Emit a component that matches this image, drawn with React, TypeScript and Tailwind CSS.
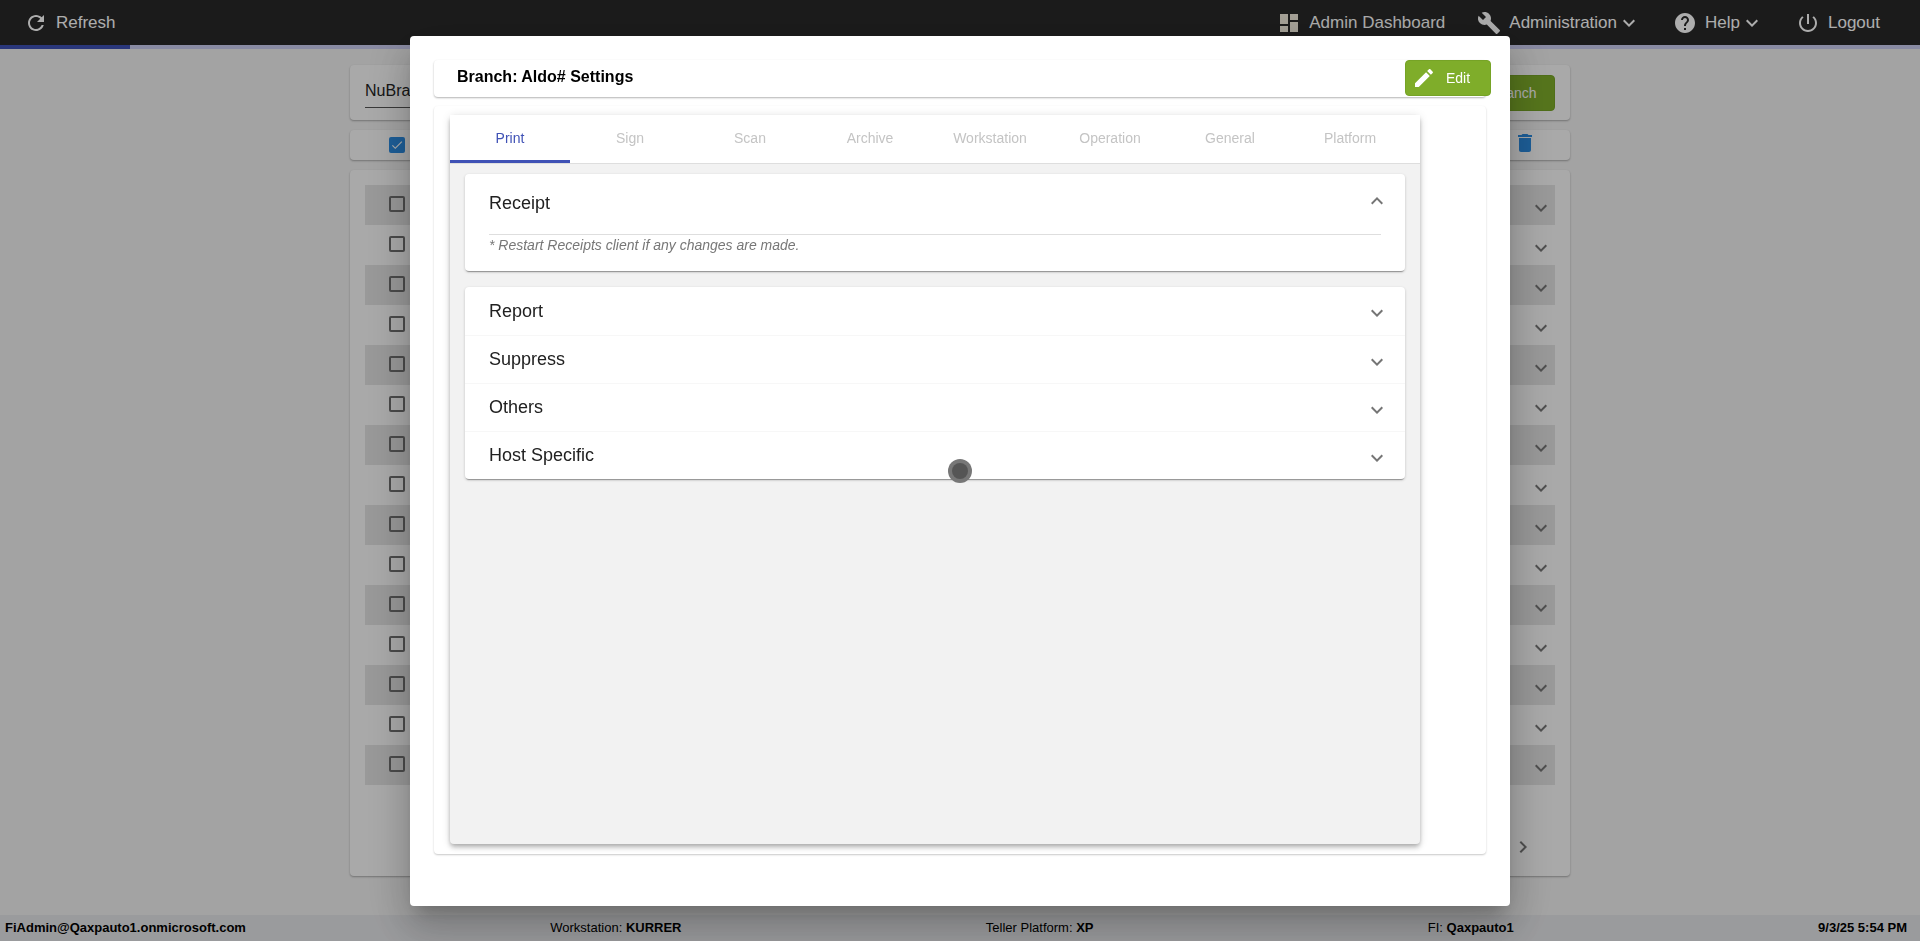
const font = "font-['Liberation_Sans',Arial,sans-serif]";

const tabs = ["Print", "Sign", "Scan", "Archive", "Workstation", "Operation", "General", "Platform"];
const closedPanels = ["Report", "Suppress", "Others", "Host Specific"];
const rows = Array.from({ length: 15 }, (_, i) => i);

const MaterialIcon = ({ d, className }: { d: string; className?: string }) => (
  <svg viewBox="0 0 24 24" className={`h-6 w-6 shrink-0 fill-current ${className ?? ""}`}>
    <path d={d} />
  </svg>
);

const icons = {
  refresh:
    "M17.65 6.35C16.2 4.9 14.21 4 12 4c-4.42 0-7.99 3.58-7.99 8s3.57 8 7.99 8c3.73 0 6.84-2.55 7.73-6h-2.08c-.82 2.33-3.04 4-5.65 4-3.31 0-6-2.69-6-6s2.69-6 6-6c1.66 0 3.14.69 4.22 1.78L13 11h7V4l-2.35 2.35z",
  dashboard: "M3 13h8V3H3v10zm0 8h8v-6H3v6zm10 0h8V11h-8v10zm0-18v6h8V3h-8z",
  build:
    "M22.7 19l-9.1-9.1c.9-2.3.4-5-1.5-6.9-2-2-5-2.4-7.4-1.3L9 6 6 9 1.6 4.7C.4 7.1.9 10.1 2.9 12.1c1.9 1.9 4.6 2.4 6.9 1.5l9.1 9.1c.4.4 1 .4 1.4 0l2.3-2.3c.5-.4.5-1.1.1-1.4z",
  help: "M12 2C6.48 2 2 6.48 2 12s4.48 10 10 10 10-4.48 10-10S17.52 2 12 2zm1 17h-2v-2h2v2zm2.07-7.75l-.9.92C13.45 12.9 13 13.5 13 15h-2v-.5c0-1.1.45-2.1 1.17-2.83l1.24-1.26c.37-.36.59-.86.59-1.41 0-1.1-.9-2-2-2s-2 .9-2 2H8c0-2.21 1.79-4 4-4s4 1.79 4 4c0 .88-.36 1.68-.93 2.25z",
  power:
    "M13 3h-2v10h2V3zm4.83 2.17l-1.42 1.42C17.99 7.86 19 9.81 19 12c0 3.87-3.13 7-7 7s-7-3.13-7-7c0-2.19 1.01-4.14 2.58-5.42L6.17 5.17C4.23 6.82 3 9.26 3 12c0 4.97 4.03 9 9 9s9-4.03 9-9c0-2.74-1.23-5.18-3.17-6.83z",
  down: "M16.59 8.59L12 13.17 7.41 8.59 6 10l6 6 6-6z",
  up: "M12 8l-6 6 1.41 1.41L12 10.83l4.59 4.58L18 14z",
  right: "M10 6L8.59 7.41 13.17 12l-4.58 4.59L10 18l6-6z",
  edit: "M3 17.25V21h3.75L17.81 9.94l-3.75-3.75L3 17.25zM20.71 7.04c.39-.39.39-1.02 0-1.41l-2.34-2.34c-.39-.39-1.02-.39-1.41 0l-1.83 1.83 3.75 3.75 1.83-1.83z",
  trash: "M6 19c0 1.1.9 2 2 2h8c1.1 0 2-.9 2-2V7H6v12zM19 4h-3.5l-1-1h-5l-1 1H5v2h14V4z",
  check: "M9 16.17L4.83 12l-1.42 1.41L9 19 21 7l-1.41-1.41z",
};

const Page = () => (
  <div className="flex h-screen flex-col overflow-hidden bg-[#f0f0f0]">
    <header className="flex h-[45px] shrink-0 items-center justify-between bg-[#292929] pl-6 pr-10 text-[17px] text-white">
      <div className="flex items-center gap-2">
        <MaterialIcon d={icons.refresh} />
        <span>Refresh</span>
      </div>
      <nav className="flex items-center gap-8">
        <div className="flex items-center gap-2">
          <MaterialIcon d={icons.dashboard} className="text-[#f5efe0]" />
          <span>Admin Dashboard</span>
        </div>
        <div className="flex items-center">
          <MaterialIcon d={icons.build} className="mr-2" />
          <span>Administration</span>
          <MaterialIcon d={icons.down} />
        </div>
        <div className="flex items-center">
          <MaterialIcon d={icons.help} className="mr-2" />
          <span>Help</span>
          <MaterialIcon d={icons.down} />
        </div>
        <div className="flex items-center gap-2">
          <MaterialIcon d={icons.power} />
          <span>Logout</span>
        </div>
      </nav>
    </header>
    <div className="h-1 shrink-0 bg-[#cbcdf0]">
      <div className="h-1 w-[130px] bg-[#3f51b5]" />
    </div>

    <main className="mx-auto flex w-[1220px] flex-1 flex-col gap-2.5 pt-4">
      <div className="flex h-[55px] items-center justify-between rounded bg-[#fafafa] px-[15px] shadow-[0_1px_2px_rgba(0,0,0,0.3)]">
        <div className="mt-[-2px] w-[200px] border-b border-[#555] py-1 text-base text-[#222]">NuBranch</div>
        <button type="button" className="h-9 w-[130px] rounded-sm border border-[#76a326] bg-[#7fad2a] pl-5 text-sm text-white">
          Add Branch
        </button>
      </div>
      <div className="flex h-[30px] items-center justify-between rounded bg-[#fafafa] pl-[39px] pr-[33px] shadow-[0_1px_2px_rgba(0,0,0,0.3)]">
        <span className="flex h-4 w-4 items-center justify-center rounded-[2px] bg-[#2b8be0] text-white">
          <svg viewBox="0 0 24 24" className="h-3.5 w-3.5 fill-current">
            <path d={icons.check} />
          </svg>
        </span>
        <MaterialIcon d={icons.trash} className="mt-[-4px] text-[#2b8be0]" />
      </div>
      <div className="flex h-[706px] flex-col rounded bg-[#fafafa] px-[15px] pt-[15px] shadow-[0_1px_2px_rgba(0,0,0,0.3)]">
        {rows.map((row) => (
          <div
            key={row}
            className={`flex h-10 shrink-0 items-center justify-between pl-6 pr-0.5 text-[#757575] ${row % 2 === 0 ? "bg-[#e2e2e2]" : ""}`}
          >
            <span className="mt-[-2px] h-4 w-4 rounded-[2px] border-2 border-[#6e6e6e]" />
            <MaterialIcon d={icons.down} className="mt-[5px]" />
          </div>
        ))}
        <div className="mt-[50px] flex justify-end pr-5 text-[#757575]">
          <MaterialIcon d={icons.right} />
        </div>
      </div>
    </main>

    <footer className="flex h-[26px] shrink-0 items-center justify-between bg-[#e4e5e8] pl-[5px] pr-[13px] text-[13px] text-black">
      <b>FiAdmin@Qaxpauto1.onmicrosoft.com</b>
      <span>
        Workstation: <b>KURRER</b>
      </span>
      <span>
        Teller Platform: <b>XP</b>
      </span>
      <span className="ml-[30px]">
        FI: <b>Qaxpauto1</b>
      </span>
      <b>9/3/25 5:54 PM</b>
    </footer>
  </div>
);

const SettingsDialog = () => (
  <div className="h-[870px] w-[1100px] rounded bg-white px-6 pt-6 shadow-[0_11px_15px_-7px_rgba(0,0,0,0.2),0_24px_38px_3px_rgba(0,0,0,0.14),0_9px_46px_8px_rgba(0,0,0,0.12)]">
    <div className="flex h-[37px] items-start justify-between rounded shadow-[0_1px_2px_rgba(0,0,0,0.3)]">
      <h2 className="pl-[23px] pt-[8px] text-base font-bold leading-[18px] text-black">Branch: Aldo# Settings</h2>
      <button
        type="button"
        className="mr-[-5px] flex h-9 w-[86px] items-center gap-2.5 rounded border border-[#76a326] bg-[#7fad2a] pl-[6px] text-sm text-white"
      >
        <MaterialIcon d={icons.edit} />
        <span>Edit</span>
      </button>
    </div>

    <div className="mt-[9px] h-[748px] rounded pl-4 pt-[9px] shadow-[0_1px_2px_rgba(0,0,0,0.22)]">
      <div className="flex h-[729px] w-[970px] flex-col rounded-sm bg-[#f2f2f2] shadow-[0_2px_4px_-1px_rgba(0,0,0,0.2),0_4px_5px_rgba(0,0,0,0.14),0_1px_10px_rgba(0,0,0,0.12)]">
        <div className="flex h-[49px] shrink-0 border-b border-[#dedede] bg-white text-sm">
          {tabs.map((tab, i) => (
            <div
              key={tab}
              className={`flex h-[48px] w-[120px] items-center justify-center pb-0.5 ${
                i === 0 ? "border-b-[3px] border-[#3f51b5] pt-[3px] text-[#3f51b5]" : "text-[#c4c4c4]"
              }`}
            >
              {tab}
            </div>
          ))}
        </div>

        <div className="flex flex-col gap-4 px-[15px] pt-2.5">
          <section className="h-[97px] rounded bg-white shadow-[0_2px_1px_-1px_rgba(0,0,0,0.3),0_1px_3px_rgba(0,0,0,0.2)]">
            <div className="flex h-[58px] items-center justify-between pl-6 pr-4 text-lg text-[#212121]">
              <span>Receipt</span>
              <MaterialIcon d={icons.up} className="mt-[-4px] text-[#757575]" />
            </div>
            <p className="mx-6 mt-0.5 border-t border-[#dedede] text-sm leading-5 text-[#777] italic">
              * Restart Receipts client if any changes are made.
            </p>
          </section>

          <section className="rounded bg-white shadow-[0_2px_1px_-1px_rgba(0,0,0,0.3),0_1px_3px_rgba(0,0,0,0.2)]">
            {closedPanels.map((panel, i) => (
              <div
                key={panel}
                className={`flex h-12 items-center justify-between pl-6 pr-4 text-lg text-[#212121] ${i > 0 ? "border-t border-[#f7f7f7]" : ""}`}
              >
                <span>{panel}</span>
                <MaterialIcon d={icons.down} className="mt-[5px] text-[#757575]" />
              </div>
            ))}
          </section>
        </div>
      </div>
    </div>
  </div>
);

export default function App() {
  return (
    <div className={font}>
      <Page />
      <div className="fixed inset-0 flex items-center justify-center bg-black/32">
        <SettingsDialog />
      </div>
      {/* cursor highlight from the screen recorder */}
      <div className="fixed left-[948px] top-[459px] flex h-6 w-6 items-center justify-center rounded-full bg-[#777]">
        <div className="h-4 w-4 rounded-full bg-[#555]" />
      </div>
    </div>
  );
}
